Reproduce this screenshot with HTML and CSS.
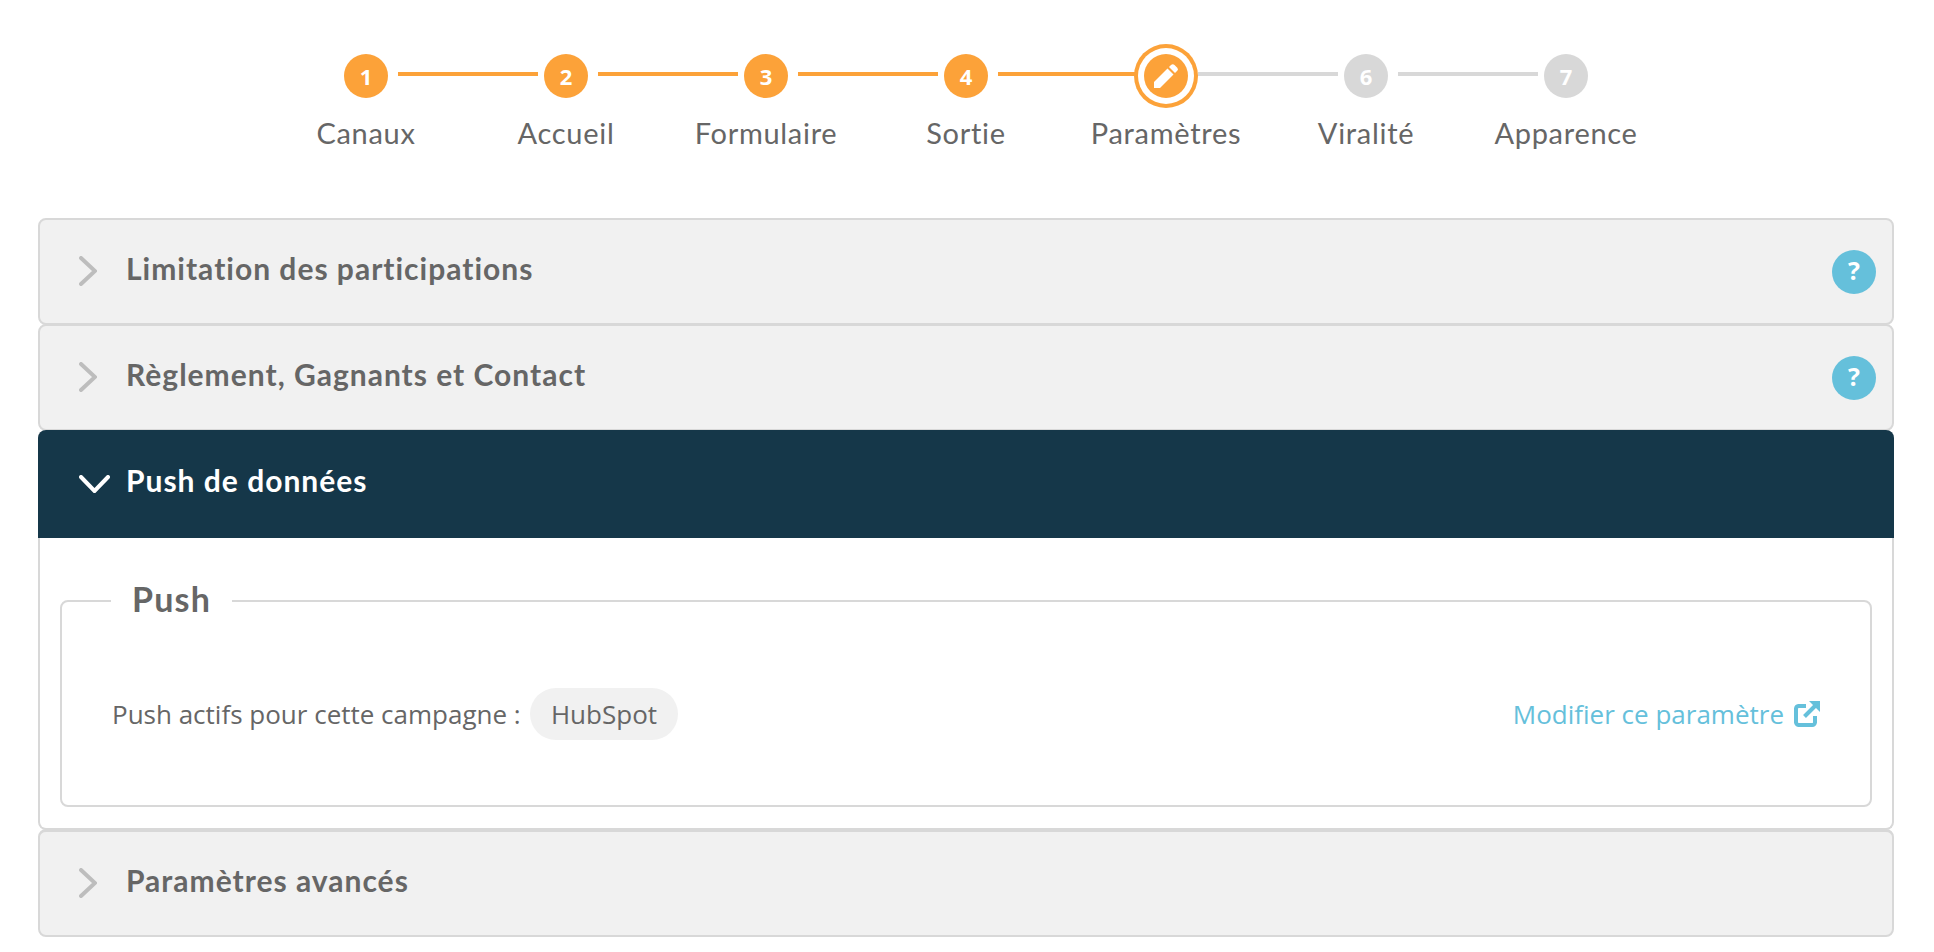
FILE: index.html
```html
<!DOCTYPE html>
<html lang="fr">
<head>
<meta charset="utf-8">
<title>Paramètres</title>
<link rel="stylesheet" href="styles.css">
</head>
<body>
<nav class="stepper">
  <div class="step done"><span class="node">1</span><span class="label">Canaux</span></div>
  <div class="step done"><span class="node">2</span><span class="label">Accueil</span></div>
  <div class="step done"><span class="node">3</span><span class="label">Formulaire</span></div>
  <div class="step done"><span class="node">4</span><span class="label">Sortie</span></div>
  <div class="step active"><span class="node"><svg class="pencil" viewBox="0 0 24 24"><path d="M0 18 13.5 4.5 19.5 10.5 6 24H0Z"/><path d="M15 3 17 1a2.5 2.5 0 0 1 3.500 0L23 3.500a2.500 2.500 0 0 1 0 3.500L21 9Z"/></svg></span><span class="label">Paramètres</span></div>
  <div class="step todo"><span class="node">6</span><span class="label">Viralité</span></div>
  <div class="step todo last"><span class="node">7</span><span class="label">Apparence</span></div>
</nav>
<main class="accordion">
  <section class="item">
    <header class="head">
      <svg class="chev" viewBox="0 0 18 30"><path d="M2 2 16 15 2 28"/></svg>
      <h2>Limitation des participations</h2>
      <span class="help">?</span>
    </header>
  </section>
  <section class="item">
    <header class="head">
      <svg class="chev" viewBox="0 0 18 30"><path d="M2 2 16 15 2 28"/></svg>
      <h2>Règlement, Gagnants et Contact</h2>
      <span class="help">?</span>
    </header>
  </section>
  <section class="item open">
    <header class="head">
      <svg class="chev-down" viewBox="0 0 31 18"><path d="M2 2 15.500 16 29 2"/></svg>
      <h2>Push de données</h2>
    </header>
    <div class="panel">
      <fieldset class="box">
        <legend>Push</legend>
        <div class="row">
          <div class="active-list">Push actifs pour cette campagne : <span class="pill">HubSpot</span></div>
          <a class="link" href="#">Modifier ce paramètre
            <svg class="ext" viewBox="0 0 26 26"><path class="ext-box" d="M12 5H4.500A3 3 0 0 0 2 7.500V21.500A3 3 0 0 0 4.500 24H18A3 3 0 0 0 21 21.500V15"/><path class="ext-line" d="M21 5 10.500 15.500"/><path class="ext-tip" d="M15 0H26V11Z"/></svg>
          </a>
        </div>
      </fieldset>
    </div>
  </section>
  <section class="item last-item">
    <header class="head">
      <svg class="chev" viewBox="0 0 18 30"><path d="M2 2 16 15 2 28"/></svg>
      <h2>Paramètres avancés</h2>
    </header>
  </section>
</main>
</body>
</html>
```
FILE: styles.css
```css
* { box-sizing: border-box; }
html, body { margin: 0; background: #fff; }
body {
  height: 952px;
  overflow: hidden;
  color: #666;
  font-family: "Open Sans", sans-serif;
}

/* stepper */
.stepper {
  display: flex;
  justify-content: center;
  padding: 44px 0 0 0;
  height: 218px;
  margin-left: -2px;
}
.step {
  position: relative;
  width: 200px;
  display: flex;
  flex-direction: column;
  align-items: center;
}
.step::after {
  content: "";
  position: absolute;
  top: 28px;
  left: calc(50% + 32px);
  width: 140px;
  height: 4px;
  background: #fca239;
}
.step.active::after, .step.todo::after { background: #d8d8d8; }
.step.last::after { display: none; }
.node {
  width: 44px;
  height: 44px;
  margin: 10px 0;
  border-radius: 50%;
  display: flex;
  align-items: center;
  justify-content: center;
  background: #fca239;
  color: #fff;
  font-weight: 700;
  font-size: 22px;
  position: relative;
  z-index: 1;
}
.todo .node { background: #d8d8d8; }
.active .node {
  box-shadow: 0 0 0 6px #fff, 0 0 0 10px #fca239;
}
.pencil { width: 24px; height: 24px; fill: #fff; }
.label {
  margin-top: 5px;
  font-family: Lato, sans-serif;
  font-size: 29px;
  letter-spacing: 0.7px;
  line-height: 40px;
  white-space: nowrap;
}

/* accordion */
.accordion { margin: 0 40px 0 38px; }
.item { border: 2px solid #d8d8d8; border-radius: 8px; background: #f1f1f1; }
.item + .item { margin-top: -1px; }
.head {
  display: flex;
  align-items: center;
  height: 103px;
  padding: 0 16px 0 39px;
}
.head h2 {
  margin: 0 0 0 29px;
  flex: 1;
  font-family: Lato, sans-serif;
  font-size: 30px;
  font-weight: 700;
  letter-spacing: 1px;
  padding-bottom: 8px;
}
.chev { width: 18px; height: 30px; fill: none; stroke: #bdbdbd; stroke-width: 4; stroke-linecap: round; margin-top: -2px; }
.help {
  width: 44px;
  height: 44px;
  border-radius: 50%;
  background: #65c0db;
  color: #fff;
  font-weight: 700;
  font-size: 25px;
  padding-bottom: 3px;
  display: flex;
  align-items: center;
  justify-content: center;
}
.item.open { background: #fff; position: relative; z-index: 1; border-top: 0; border-radius: 8px; }
.open .head {
  height: 108px;
  margin: 0 -2px;
  padding-left: 41px;
  background: #153749;
  color: #fff;
  border-radius: 8px 8px 0 0;
}
.open .head h2 { margin-left: 16px; }
.chev-down { width: 31px; height: 18px; fill: none; stroke: #fff; stroke-width: 4; stroke-linecap: round; }
.panel { padding: 41px 20px 0 20px; height: 290px; }
.box {
  margin: 0;
  padding: 0 50px 0 50px;
  height: 228px;
  border: 2px solid #d8d8d8;
  border-radius: 8px;
}
.box legend {
  margin-left: -1px;
  padding: 0 21px 4px;
  font-family: Lato, sans-serif;
  font-weight: 700;
  font-size: 34px;
  letter-spacing: 1.2px;
  line-height: 40px;
}
.row {
  display: flex;
  justify-content: space-between;
  align-items: center;
  height: 182px;
  font-size: 26px;
}
.pill {
  display: inline-block;
  margin-left: 3px;
  padding: 0 20.5px;
  height: 52px;
  line-height: 52px;
  border-radius: 26px;
  background: #f1f1f1;
}
.link {
  color: #65c0db;
  text-decoration: none;
  display: flex;
  align-items: center;
  gap: 10px;
}
.ext { width: 26px; height: 26px; }
.ext-box, .ext-line { fill: none; stroke: #65c0db; stroke-width: 4; }
.ext-tip { fill: #65c0db; }
.item.last-item { border-top-width: 3px; }
```
